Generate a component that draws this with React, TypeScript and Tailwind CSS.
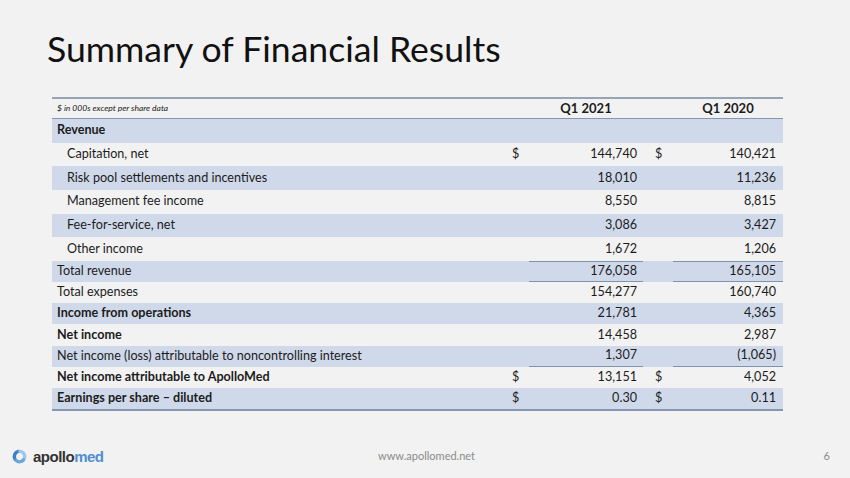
import React from "react";

type Row = {
  label: string;
  bold?: boolean;
  indent?: boolean;
  band?: boolean;
  d1?: boolean;
  v1: string;
  d2?: boolean;
  v2: string;
  lineTop?: boolean;
  lineBottom?: boolean;
  tall?: boolean;
};

const rows: Row[] = [
  { label: "Revenue", bold: true, band: true, v1: "", v2: "", tall: true },
  { label: "Capitation, net", indent: true, d1: true, v1: "144,740", d2: true, v2: "140,421", tall: true },
  { label: "Risk pool settlements and incentives", indent: true, band: true, v1: "18,010", v2: "11,236", tall: true },
  { label: "Management fee income", indent: true, v1: "8,550", v2: "8,815", tall: true },
  { label: "Fee-for-service, net", indent: true, band: true, v1: "3,086", v2: "3,427", tall: true },
  { label: "Other income", indent: true, v1: "1,672", v2: "1,206", tall: true },
  { label: "Total revenue", band: true, v1: "176,058", v2: "165,105", lineTop: true, lineBottom: true },
  { label: "Total expenses", v1: "154,277", v2: "160,740" },
  { label: "Income from operations", bold: true, band: true, v1: "21,781", v2: "4,365" },
  { label: "Net income", bold: true, v1: "14,458", v2: "2,987" },
  { label: "Net income (loss) attributable to noncontrolling interest", band: true, v1: "1,307", v2: "(1,065)", lineBottom: true },
  { label: "Net income attributable to ApolloMed", bold: true, d1: true, v1: "13,151", d2: true, v2: "4,052" },
  { label: "Earnings per share \u2013 diluted", bold: true, band: true, d1: true, v1: "0.30", d2: true, v2: "0.11" },
];

function arc(cx: number, cy: number, r: number, a0: number, a1: number) {
  const rad = (a: number) => (a * Math.PI) / 180;
  const x0 = cx + r * Math.cos(rad(a0));
  const y0 = cy + r * Math.sin(rad(a0));
  const x1 = cx + r * Math.cos(rad(a1));
  const y1 = cy + r * Math.sin(rad(a1));
  return `M${x0.toFixed(2)} ${y0.toFixed(2)} A${r} ${r} 0 0 1 ${x1.toFixed(2)} ${y1.toFixed(2)}`;
}

function Logo() {
  return (
    <div className="flex items-center gap-[5px]">
      <svg width="17" height="15" viewBox="0 0 17 15">
        <path d={arc(8.5, 7.5, 5.2, 150, 255)} stroke="#3f80c4" strokeWidth="3.4" fill="none" strokeLinecap="round" />
        <path d={arc(8.5, 7.5, 5.2, 275, 20)} stroke="#9cc6ea" strokeWidth="3.4" fill="none" strokeLinecap="round" />
        <path d={arc(8.5, 7.5, 5.2, 40, 130)} stroke="#6aa5da" strokeWidth="3.4" fill="none" strokeLinecap="round" />
      </svg>
      <div
        className="text-[15px] font-bold leading-none tracking-[-0.5px]"
        style={{ fontFamily: '"Liberation Sans", Arial, sans-serif' }}
      >
        <span className="text-[#333333]">apollo</span>
        <span className="text-[#4d8fd0]">med</span>
      </div>
    </div>
  );
}

export default function App() {
  return (
    <div
      className="w-[850px] h-[478px] bg-[#f2f2f2] text-[#1c1c1c] flex flex-col overflow-hidden"
      style={{ fontFamily: 'Lato, "Open Sans", sans-serif' }}
    >
      <h1 className="ml-[47px] mt-[26px] text-[35.6px] leading-[46px] text-[#111111]">
        Summary of Financial Results
      </h1>
      <div className="ml-[52px] mt-[25px] w-[731px]">
        <div className="border-t-[2px] border-[#97a4b4] border-b border-b-[#8497b0] grid grid-cols-[453px_24px_114px_30px_110px] h-[22px] items-center">
          <div className="pl-[5px] text-[8.5px] italic">$ in 000s except per share data</div>
          <div />
          <div className="text-center font-bold text-[13px]">Q1 2021</div>
          <div />
          <div className="text-center font-bold text-[13px]">Q1 2020</div>
        </div>
        {rows.map((r, i) => (
          <div
            key={i}
            className={
              "grid grid-cols-[453px_24px_114px_30px_110px] text-[12.6px] " +
              (r.tall ? "h-[23.7px] " : "h-[21.1px] ") +
              (r.band ? "bg-[#cfd9ea] " : "") +
              (i === rows.length - 1 ? "border-b-[2px] border-[#8497b0] box-content " : "")
            }
          >
            <div className={"flex items-center " + (r.indent ? "pl-[15px] " : "pl-[5px] ") + (r.bold ? "font-bold" : "")}>
              {r.label}
            </div>
            <div className="flex items-center pl-[7px]">{r.d1 ? "$" : ""}</div>
            <div
              className={
                "flex items-center justify-end pr-[6px] " +
                (r.lineTop ? "border-t border-[#7e93b0] " : "") +
                (r.lineBottom ? "border-b border-[#7e93b0] " : "")
              }
            >
              {r.v1}
            </div>
            <div className="flex items-center pl-[12px]">{r.d2 ? "$" : ""}</div>
            <div
              className={
                "flex items-center justify-end pr-[7px] " +
                (r.lineTop ? "border-t border-[#7e93b0] " : "") +
                (r.lineBottom ? "border-b border-[#7e93b0] " : "")
              }
            >
              {r.v2}
            </div>
          </div>
        ))}
      </div>
      <div className="mt-auto mb-[12px] flex items-center h-[20px]">
        <div className="ml-[11px] w-[367px]">
          <Logo />
        </div>
        <div className="text-[11px] text-[#8a8a8a]">www.apollomed.net</div>
        <div className="ml-auto mr-[20px] text-[11px] text-[#8a8a8a]">6</div>
      </div>
    </div>
  );
}
